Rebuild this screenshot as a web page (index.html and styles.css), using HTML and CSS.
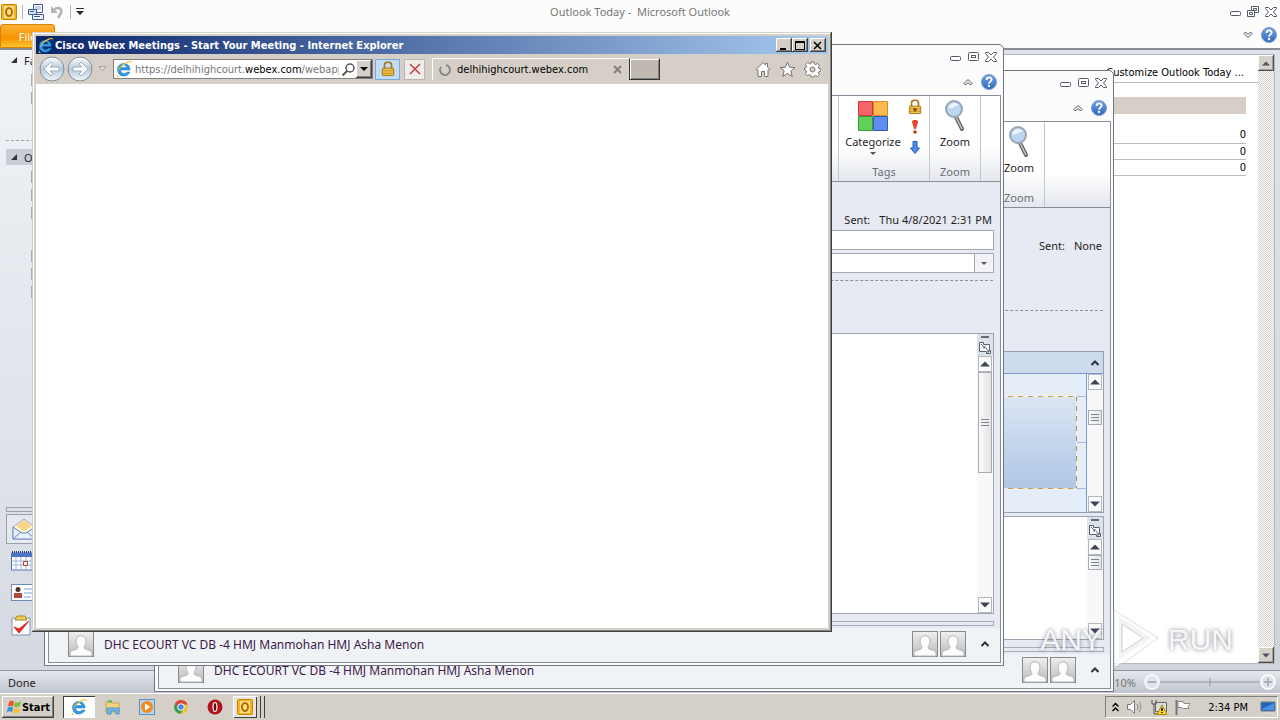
FILE: index.html
```html
<!DOCTYPE html>
<html lang="en">
<head>
  <meta charset="UTF-8">
  <meta name="viewport" content="width=device-width, initial-scale=1.0">
  <title>Desktop</title>
  <link rel="stylesheet" href="styles.css">
</head>
<body>
  <!-- Shared icons -->
  <svg class="defs" aria-hidden="true">
    <defs>
      <linearGradient id="avatar-bg" x1="0" y1="0" x2="0" y2="1">
        <stop offset="0" stop-color="#f0f0f0"/><stop offset="1" stop-color="#b8b8b8"/>
      </linearGradient>
      <linearGradient id="help-bg" x1="0" y1="0" x2="0" y2="1">
        <stop offset="0" stop-color="#6f9fe0"/><stop offset="1" stop-color="#2f6abf"/>
      </linearGradient>
      <linearGradient id="nav-bg" x1="0" y1="0" x2="0" y2="1">
        <stop offset="0" stop-color="#ffffff"/><stop offset="0.5" stop-color="#b9c8d6"/><stop offset="1" stop-color="#eef6fb"/>
      </linearGradient>
    </defs>
    <symbol id="minimize" viewBox="0 0 12 12"><rect x="1.500" y="5.500" width="10" height="4" rx="1" fill="#fff" stroke="#555b66"/></symbol>
    <symbol id="maximize" viewBox="0 0 12 12"><rect x="1.500" y="1.500" width="10" height="8" rx="1" fill="#fff" stroke="#555b66"/><rect x="4.500" y="4.500" width="4" height="2" fill="#fff" stroke="#555b66"/></symbol>
    <symbol id="restore" viewBox="0 0 12 12"><path d="M4.500 .5h7v6h-7zM6.500 2.500h3v2h-3z" fill="#fff" stroke="#555b66"/><path d="M.5 4.500h7v6h-7zM2.500 6.500h3v2h-3z" fill="#fff" stroke="#555b66"/></symbol>
    <symbol id="close" viewBox="0 0 12 12"><path d="M.5 1.500h3L6 4l2.500-2.500h3v1L8.500 6l3 3.500v1h-3L6 8l-2.500 2.500h-3v-1L3.500 6l-3-3.500z" fill="#fff" stroke="#555b66"/></symbol>
    <symbol id="caret" viewBox="0 0 10 8"><path d="M1 5.500 5 1.500l4 4-1.500 1.500L5 4.500 2.500 7z" fill="#fff" stroke="#444a55"/></symbol>
    <symbol id="caret-dark" viewBox="0 0 10 8"><path d="M1.500 6 5 2.500 8.500 6" fill="none" stroke="#2a3340" stroke-width="2"/></symbol>
    <symbol id="help" viewBox="0 0 16 16"><circle cx="8" cy="8" r="7.500" fill="url(#help-bg)" stroke="#7c9bce"/><path d="M5.500 6c0-3.500 5.200-3.300 5.200-.4C10.700 7.500 8 7.400 8 9.700" fill="none" stroke="#fff" stroke-width="1.800"/><circle cx="8" cy="12" r="1.200" fill="#fff"/></symbol>
    <symbol id="up" viewBox="0 0 10 6"><path d="M0 5.500 5 .5l5 5z" fill="#3c4558"/></symbol>
    <symbol id="down" viewBox="0 0 10 6"><path d="M0 .5h10l-5 5z" fill="#3c4558"/></symbol>
    <symbol id="resize" viewBox="0 0 14 14"><path d="M1.500 1.500h4v2h6v6h1v3h-4v-2h-7z" fill="#fff" stroke="#5a6272"/><path d="m3 3 4 4m0-2v2H5m3 0 3 4m0-2v2H9" stroke="#5a6272" fill="none"/></symbol>
    <symbol id="avatar" viewBox="0 0 26 26"><rect x=".5" y=".5" width="25" height="25" fill="url(#avatar-bg)" stroke="#8a8a8a"/><path d="M2 25v-3c0-3 7-3 8-5 0-2-2-3-2-7 0-7 10-7 10 0 0 4-2 5-2 7 1 2 8 2 8 5v3z" fill="#fdfdfd" stroke="#b5b5b5"/></symbol>
    <symbol id="magnifier" viewBox="0 0 22 34"><path d="m12 18 6 12" stroke="#666" stroke-width="4" stroke-linecap="round"/><path d="m12 18 6 12" stroke="#c4c4c4" stroke-width="1.500"/><circle cx="10" cy="10" r="8" fill="#b9d6f3" stroke="#9aa5b3" stroke-width="2"/><path d="M4 9c2-6 8-6 11-3-4 0-6 5-11 3z" fill="#eaf4fd"/></symbol>
    <symbol id="ie" viewBox="0 0 18 18"><path d="M15 10H5.500c.5 4 5 4.500 6.500 2h3c-2.500 6-12.500 5.500-12.500-2.500 0-8 13-8.500 12.500.5zM5.700 7.500h6c-.5-3.500-5.500-3.500-6 0z" fill="#2b9be6" fill-rule="evenodd" stroke="#1c72bd" stroke-width=".5"/><path d="M3.500 12C.5 17 1.500 18 5 16c-5 1-2-7 4-11s9-4 7.500.5C19 0 14 0 9 3.500S3 10 3.500 12z" fill="#f6c430"/></symbol>
    <symbol id="outlook" viewBox="0 0 16 16"><rect x=".5" y=".5" width="15" height="15" rx="1" fill="#f6b51e" stroke="#c98407"/><rect x="3" y="2" width="10" height="12" fill="#fce08a"/><ellipse cx="8" cy="8" rx="3" ry="4" fill="none" stroke="#b66d00" stroke-width="2"/></symbol>
    <symbol id="lock" viewBox="0 0 16 18"><path d="M4 9V5c0-5 8-5 8 0v4" fill="none" stroke="#a77a1a" stroke-width="2"/><rect x="1.500" y="8" width="13" height="8.500" rx="1" fill="#efc24c" stroke="#9a6b10"/><path d="M2 11h12M2 14h12" stroke="#c28d20"/></symbol>
  </svg>

  <main class="desktop">
    <!-- Outlook main window -->
    <section class="outlook">
      <header class="outlook-title">
        <div class="quick-bar">
          <svg class="icon16"><use href="#outlook"/></svg>
          <i class="bar"></i>
          <button aria-label="Send and receive"><svg width="16" height="16" viewBox="0 0 16 16"><path d="M5.500.5h9v8h-9z" fill="#fff" stroke="#3e5a9a"/><path d="M7 3h6M7 5h6" stroke="#8aa0cc"/><path d="M.5 5.500h8v5h-8z" fill="#d9e3f6" stroke="#3e5a9a"/><path d="M4.500 10.500h11v5h-11z" fill="#eef3fc" stroke="#3e5a9a"/><path d="M6 12.500h6M2 7.500h4" stroke="#3e5a9a"/></svg></button>
          <button aria-label="Undo"><svg width="16" height="16" viewBox="0 0 16 16"><path d="M4 7c4-5 10-3 8 2l-3 5" fill="none" stroke="#b4b4b4" stroke-width="2.500"/><path d="M2 2v7h7z" fill="#b4b4b4"/></svg></button>
          <i class="bar"></i>
          <button aria-label="Customize"><svg width="8" height="7" viewBox="0 0 8 7"><path d="M0 .5h8" stroke="#333"/><path d="M0 3h8L4 7z" fill="#222"/></svg></button>
        </div>
        <h1>Outlook Today - &nbsp;Microsoft Outlook</h1>
        <div class="win-buttons">
          <button aria-label="Minimize"><svg><use href="#minimize"/></svg></button>
          <button aria-label="Restore"><svg><use href="#restore"/></svg></button>
          <button aria-label="Close"><svg><use href="#close"/></svg></button>
        </div>
      </header>
      <div class="outlook-tabs">
        <button class="file-tab">File</button>
        <div class="help-row">
          <button aria-label="Expand ribbon"><svg class="caret flip"><use href="#caret"/></svg></button>
          <button aria-label="Help"><svg class="icon16"><use href="#help"/></svg></button>
        </div>
      </div>
      <div class="outlook-body">
        <nav class="folders">
          <h2><i class="tri"></i>Favorites</h2>
          <ul class="stubs"><li></li><li></li></ul>
          <hr>
          <h2 class="selected"><i class="tri"></i>Outlook Data File</h2>
          <ul class="stubs"><li></li><li></li><li></li></ul>
          <ul class="stubs second"><li></li><li></li><li></li></ul>
          <div class="modules">
            <i class="grip"></i>
            <button class="current" aria-label="Mail"><svg width="24" height="22" viewBox="0 0 24 22"><path d="M1 9 12 1l11 8v12H1z" fill="#fff8dc" stroke="#9daccc"/><path d="m4 8 8-6 8 6-8 5z" fill="#f7d486"/><path d="m1 9 9 6h4l9-6v12H1z" fill="#e7f0fc" stroke="#6886b8"/><path d="m1 21 8-7m14 7-8-7" stroke="#6886b8"/></svg></button>
            <button aria-label="Calendar"><svg width="24" height="22" viewBox="0 0 24 22"><path d="M.5 3h23v17H.5z" fill="#fff" stroke="#5576b5"/><path d="M.5 3h23v4H.5z" fill="#4b74c4"/><path d="M1 11h22M1 15h22M5 7v13m5-13v13m5-13v13m5-13v13" stroke="#9db6df"/><path d="M1 2h22" stroke="#274579" stroke-width="2" stroke-dasharray="1 1"/><path d="M12.500 11.500h4v4h-4z" fill="#fff" stroke="#c2342c"/></svg></button>
            <button aria-label="Contacts"><svg width="24" height="18" viewBox="0 0 24 18"><rect x=".5" y=".5" width="23" height="16" fill="#fff" stroke="#7189b5"/><circle cx="7" cy="5.500" r="2.500" fill="#50342a"/><path d="M3 14V9h8v5z" fill="#b44a3c"/><path d="M13 5h9m-9 4h9m-9 4h7" stroke="#7ca0da"/></svg></button>
            <button aria-label="Tasks"><svg width="20" height="21" viewBox="0 0 20 21"><path d="M1 3h18v17H1z" fill="#fff" stroke="#7e8fb3"/><path d="M6 1h8l2 4H4z" fill="#f1ce5c" stroke="#a98520"/><path d="m3 12 5 6 10-12-10 8z" fill="#e22a20" stroke="#c8312c"/></svg></button>
          </div>
        </nav>
        <article class="today">
          <div class="today-page">
            <a href="#">Customize Outlook Today ...</a>
            <div class="today-bar"></div>
            <table>
              <tr><td>0</td></tr>
              <tr><td>0</td></tr>
              <tr><td>0</td></tr>
            </table>
          </div>
          <div class="classic-scroll">
            <button aria-label="Scroll up"><svg width="8" height="5" viewBox="0 0 10 6"><use href="#up"/></svg></button>
            <button aria-label="Scroll down"><svg width="8" height="5" viewBox="0 0 10 6"><use href="#down"/></svg></button>
          </div>
        </article>
      </div>
      <footer class="outlook-status">
        <span>Done</span>
        <div class="zoom">
          <span>10%</span>
          <svg width="132" height="16" viewBox="0 0 132 16"><path d="M16 8h100M66 4v8" stroke="#8f98a5"/><g fill="#e0e4ea" stroke="#fff" stroke-width="1.500"><circle cx="8" cy="8" r="7"/><circle cx="124" cy="8" r="7"/></g><path d="M4 8h8m108 0h8m-4-4v8" stroke="#a9b0bb" stroke-width="2"/></svg>
        </div>
      </footer>
    </section>

    <!-- Meeting request window -->
    <section class="message back">
      <div class="message-frame">
        <header class="message-top">
          <div class="win-buttons">
            <button aria-label="Minimize"><svg><use href="#minimize"/></svg></button>
            <button aria-label="Maximize"><svg><use href="#maximize"/></svg></button>
            <button aria-label="Close"><svg><use href="#close"/></svg></button>
          </div>
          <div class="help-row">
            <button aria-label="Minimize ribbon"><svg class="caret"><use href="#caret"/></svg></button>
            <button aria-label="Help"><svg class="icon16"><use href="#help"/></svg></button>
          </div>
        </header>
        <div class="ribbon">
          <div class="group zoom-group">
            <button class="big"><svg width="22" height="34"><use href="#magnifier"/></svg>Zoom</button>
            <span class="group-name">Zoom</span>
          </div>
          <div class="ribbon-end"></div>
        </div>
        <div class="content">
          <p class="sent"><span>Sent:</span><span>None</span></p>
          <hr>
          <div class="calendar">
            <div class="calendar-head"><svg class="caret"><use href="#caret-dark"/></svg></div>
            <div class="calendar-row">
              <div class="slots"><div class="slot"></div></div>
              <div class="scroll">
                <button aria-label="Scroll up"><svg><use href="#up"/></svg></button>
                <i class="thumb"></i>
                <button class="last" aria-label="Scroll down"><svg><use href="#down"/></svg></button>
              </div>
            </div>
          </div>
          <div class="mail-body">
            <div class="scroll">
              <div class="scroll-top"><i class="split"></i><svg class="resize"><use href="#resize"/></svg></div>
              <button aria-label="Scroll up"><svg><use href="#up"/></svg></button>
              <i class="thumb"></i>
              <button class="last" aria-label="Scroll down"><svg><use href="#down"/></svg></button>
            </div>
          </div>
          <i class="splitter"></i>
        </div>
        <footer class="people">
          <svg class="avatar"><use href="#avatar"/></svg>
          <span>DHC ECOURT VC DB -4 HMJ Manmohan HMJ Asha Menon</span>
          <svg class="avatar"><use href="#avatar"/></svg>
          <svg class="avatar"><use href="#avatar"/></svg>
          <button aria-label="Expand"><svg class="caret"><use href="#caret-dark"/></svg></button>
        </footer>
      </div>
    </section>

    <!-- Message window -->
    <section class="message front">
      <div class="message-frame">
        <header class="message-top">
          <div class="win-buttons">
            <button aria-label="Minimize"><svg><use href="#minimize"/></svg></button>
            <button aria-label="Maximize"><svg><use href="#maximize"/></svg></button>
            <button aria-label="Close"><svg><use href="#close"/></svg></button>
          </div>
          <div class="help-row">
            <button aria-label="Minimize ribbon"><svg class="caret"><use href="#caret"/></svg></button>
            <button aria-label="Help"><svg class="icon16"><use href="#help"/></svg></button>
          </div>
        </header>
        <div class="ribbon">
          <div class="group tags-group">
            <div class="group-row">
              <button class="big">
                <svg width="30" height="34" viewBox="0 0 30 34"><g stroke-width="1"><path d="M.5 2.500h14v14H.5z" fill="#f4646a" stroke="#cf3a36"/><path d="M15.500 2.500h14v14h-14z" fill="#fbb950" stroke="#d78c20"/><path d="M.5 17.500h14v14H.5z" fill="#62cf5a" stroke="#35a332"/><path d="M15.500 17.500h14v14h-14z" fill="#5f8cf0" stroke="#3059c0"/></g></svg>
                Categorize
                <i class="drop"></i>
              </button>
              <div class="small-icons">
                <button aria-label="Private"><svg width="14" height="16" viewBox="0 0 16 18"><use href="#lock"/><path d="M8 10v4m-2-2h4" stroke="#6b4300" stroke-width="1.500"/></svg></button>
                <button aria-label="High importance"><svg width="6" height="14" viewBox="0 0 6 14"><path d="M0 2c0-3 6-3 6 0L4 9H2z" fill="#e2492b"/><circle cx="3" cy="12" r="1.800" fill="#c9371f"/></svg></button>
                <button aria-label="Low importance"><svg width="10" height="13" viewBox="0 0 10 13"><path d="M3 .5h4V7h2.500L5 12.500.5 7H3z" fill="#4c8df0" stroke="#2757b8"/></svg></button>
              </div>
            </div>
            <span class="group-name">Tags</span>
          </div>
          <div class="group zoom-group">
            <button class="big"><svg width="22" height="34"><use href="#magnifier"/></svg>Zoom</button>
            <span class="group-name">Zoom</span>
          </div>
          <div class="ribbon-end"></div>
        </div>
        <div class="content">
          <p class="sent"><span>Sent:</span><span>Thu 4/8/2021 2:31 PM</span></p>
          <input class="field" type="text" aria-label="Subject">
          <div class="field combo">
            <input type="text" aria-label="Location">
            <button aria-label="Show locations"><i class="drop"></i></button>
          </div>
          <hr>
          <div class="mail-body">
            <div class="scroll">
              <div class="scroll-top"><i class="split"></i><svg class="resize"><use href="#resize"/></svg></div>
              <button aria-label="Scroll up"><svg><use href="#up"/></svg></button>
              <i class="thumb"></i>
              <button class="last" aria-label="Scroll down"><svg><use href="#down"/></svg></button>
            </div>
          </div>
          <i class="splitter"></i>
        </div>
        <footer class="people">
          <svg class="avatar"><use href="#avatar"/></svg>
          <span>DHC ECOURT VC DB -4 HMJ Manmohan HMJ Asha Menon</span>
          <svg class="avatar"><use href="#avatar"/></svg>
          <svg class="avatar"><use href="#avatar"/></svg>
          <button aria-label="Expand"><svg class="caret"><use href="#caret-dark"/></svg></button>
        </footer>
      </div>
    </section>

    <!-- Internet Explorer window -->
    <section class="browser">
      <header class="browser-title">
        <svg width="17" height="17"><use href="#ie"/></svg>
        <h2>Cisco Webex Meetings - Start Your Meeting - Internet Explorer</h2>
        <button aria-label="Minimize"><svg width="10" height="9" viewBox="0 0 10 9"><path d="M1 7h6v2H1z"/></svg></button>
        <button aria-label="Maximize"><svg width="10" height="9" viewBox="0 0 10 9"><path d="M0 0h10v9H0zM1 2v6h8V2z" fill-rule="evenodd"/></svg></button>
        <button class="shut" aria-label="Close"><svg width="10" height="9" viewBox="0 0 10 9"><path d="m1 1 7 7m0-7L1 8" stroke="#000" stroke-width="1.500"/></svg></button>
      </header>
      <div class="toolbar">
        <button aria-label="Back"><svg width="26" height="26" viewBox="0 0 26 26"><circle cx="13" cy="13" r="12" fill="url(#nav-bg)" stroke="#78909f"/><path d="m12 6-7 7 7 7 2-2-3-3h9v-4h-9l3-3z" fill="#fff" stroke="#9bb0bd"/></svg></button>
        <button aria-label="Forward"><svg width="26" height="26" viewBox="0 0 26 26"><circle cx="13" cy="13" r="12" fill="url(#nav-bg)" stroke="#78909f"/><path d="m14 6 7 7-7 7-2-2 3-3H6v-4h9l-3-3z" fill="#fff" stroke="#9bb0bd"/></svg></button>
        <button class="recent" aria-label="Recent pages"><svg width="9" height="6" viewBox="0 0 9 6"><path d="M1 .5h7L4.500 5z" fill="#ded9d2" stroke="#aaa49b"/></svg></button>
        <div class="address">
          <svg width="18" height="18"><use href="#ie"/></svg>
          <a href="#">https://delhihighcourt.<b>webex.com</b>/webapp</a>
          <svg width="15" height="15" viewBox="0 0 15 15"><circle cx="9" cy="6" r="4" fill="none" stroke="#555" stroke-width="1.500"/><path d="M6 9 1.500 13.500" stroke="#555" stroke-width="2"/></svg>
          <button aria-label="Show history"><i class="drop"></i></button>
        </div>
        <button class="tool secure" aria-label="Security report"><svg width="14" height="16" viewBox="0 0 16 18"><use href="#lock"/></svg></button>
        <button class="tool" aria-label="Stop"><svg width="12" height="12" viewBox="0 0 12 12"><path d="m1 1 10 10m0-10L1 11" stroke="#c2404a" stroke-width="1.500"/></svg></button>
        <div class="tab">
          <svg width="14" height="14" viewBox="0 0 14 14"><path d="M8 2a5 5 0 1 1-5 2" fill="none" stroke="#888" stroke-width="2"/></svg>
          <span>delhihighcourt.webex.com</span>
          <button aria-label="Close tab"><svg width="9" height="9" viewBox="0 0 9 9"><path d="m1 1 7 7m0-7L1 8" stroke="#84807a" stroke-width="2"/></svg></button>
        </div>
        <button class="new-tab" aria-label="New tab"></button>
        <div class="commands">
          <button aria-label="Home"><svg width="16" height="16" viewBox="0 0 16 16"><path d="M1 8.500 8 1.500l2.500 2.500V2.500h2V6L15 8.500l-1 1-1-.7v6.700H9.500v-5h-3v5H3V8.800l-1 .7z" fill="#fff" stroke="#77736e"/></svg></button>
          <button aria-label="Favorites"><svg width="17" height="17" viewBox="0 0 17 17"><path d="m8.500 1 2.100 5.200 5.400.3-4.200 3.500 1.500 5.500-4.800-3-4.800 3L5.200 10 1 6.500l5.400-.3z" fill="#fff" stroke="#77736e"/></svg></button>
          <button aria-label="Tools"><svg width="17" height="17" viewBox="0 0 17 17"><path d="M7 1h3l.4 2 1.300.6 1.800-1.200 2 2-1.200 1.800.6 1.300 2 .4v2l-2 .6-.6 1.300 1.200 1.800-2 2-1.800-1.200-1.300.6L10 16H7l-.4-2-1.300-.6-1.800 1.200-2-2 1.200-1.800-.6-1.300-1.600-.5v-2l1.600-.5.6-1.300-1.200-1.800 2-2 1.800 1.200L6.600 3z" fill="#fff" stroke="#77736e"/><circle cx="8.500" cy="8.500" r="2.500" fill="#d4d0c8" stroke="#77736e"/></svg></button>
        </div>
      </div>
      <div class="page"></div>
    </section>

    <div class="watermark">
      <span>ANY</span>
      <svg width="48" height="62" viewBox="0 0 48 62"><path d="M6 4v50l38-25z" fill="#e9ebee" fill-opacity=".6" stroke="#fff" stroke-opacity=".8" stroke-width="4"/><path d="M3 1v60l44-32z" fill="none" stroke="#c0c4c9" stroke-opacity=".6"/><path d="M11 15v28l21-14z" fill="#fff" stroke="#c0c4c9" stroke-opacity=".8"/></svg>
      <span>RUN</span>
    </div>
  </main>

  <!-- Taskbar -->
  <footer class="taskbar">
    <button class="start"><svg width="16" height="16" viewBox="0 0 16 16"><path d="M3 3c2-2 4-1 5 0L7 7.500c-2-1-3-1-5 0z" fill="#e8562a"/><path d="M9 3c2 1 4 1 6-1l-1 5c-2 1-4 2-6 .5z" fill="#7bbf3a"/><path d="M2 8.500c2-1 3-1 5 0L6 13c-2-1-4-1-5.500.5z" fill="#3a8ee0"/><path d="M8 9c2 1 4 1 6-.5L13 13c-2 1.500-4 1.500-6 .5z" fill="#f6c22d"/></svg>Start</button>
    <button class="task active" aria-label="Internet Explorer"><svg width="18" height="18"><use href="#ie"/></svg></button>
    <button class="task" aria-label="Explorer"><svg width="16" height="16" viewBox="0 0 16 16"><path d="M1 3h5l1 1h7v9H1z" fill="#f1d77c" stroke="#cba941"/><path d="M3 1h4v3H3z" fill="#7ab96b"/><path d="M2 9h12v6h-3v-3H6v3H2z" fill="#73b8e6" stroke="#4e93c7"/></svg></button>
    <button class="task" aria-label="Media Player"><svg width="16" height="16" viewBox="0 0 16 16"><rect x=".5" y=".5" width="15" height="15" fill="#b5d5ee" stroke="#5990bf"/><circle cx="8" cy="8" r="6" fill="#f38a1f"/><path d="M6 4.500v7L11.500 8z" fill="#fff"/></svg></button>
    <button class="task" aria-label="Chrome"><svg width="16" height="16" viewBox="0 0 16 16"><circle cx="8" cy="8" r="7" fill="#f2c32d"/><path d="M2 4.500a7 7 0 0 1 12.500 1H8L5 9.500z" fill="#dc4437"/><path d="M2 4.500a7 7 0 0 0 5.500 10.500l3-5H6z" fill="#3a9f55"/><circle cx="8" cy="8" r="3.300" fill="#4a86e8" stroke="#fff"/></svg></button>
    <button class="task" aria-label="Opera"><svg width="16" height="16" viewBox="0 0 16 16"><ellipse cx="8" cy="8" rx="7.500" ry="7.500" fill="#b3141b"/><ellipse cx="8" cy="8" rx="2.500" ry="5" fill="#fff"/><ellipse cx="8" cy="8" rx="1.300" ry="4" fill="#6d0a0f"/></svg></button>
    <button class="task stacked" aria-label="Outlook"><svg class="icon16"><use href="#outlook"/></svg></button>
    <div class="tray">
      <svg width="7" height="10" viewBox="0 0 7 10"><path d="M.5 4.500l3-3 3 3m-6 4.500 3-3 3 3" fill="none" stroke="#000" stroke-width="1.500"/></svg>
      <svg width="16" height="16" viewBox="0 0 16 16"><path d="M.5 5.500h3l4-4v13l-4-4h-3z" fill="#fff" stroke="#777"/><path d="M10 5c1.500 2 1.500 4 0 6m2-8c2.500 3 2.500 7 0 10" fill="none" stroke="#888"/></svg>
      <svg width="16" height="16" viewBox="0 0 16 16"><path d="M4.500 3.500h11v9h-11z" fill="#ddd" stroke="#666"/><path d="M1 1v4h4V1M3 5v10h4" fill="none" stroke="#555"/><path d="m11 6 5 9.500H6z" fill="#ffd91a" stroke="#a88600"/><path d="M11 9v3m0 1v1" stroke="#000" stroke-width="1.500"/></svg>
      <svg width="16" height="16" viewBox="0 0 16 16"><path d="M1.500 1v15" stroke="#777" stroke-width="2"/><path d="M3 2.500h5l1 2h6l-2 3 1 2H8l-1-1H3z" fill="#fff" stroke="#888"/></svg>
      <time>2:34 PM</time>
      <svg width="16" height="13" viewBox="0 0 16 13"><path d="M1 1h14v9H1z" fill="#2364bd" stroke="#6c7787"/><path d="M2 8 14 2v7H2z" fill="#4b91df"/><path d="M3 12h10" stroke="#ddd"/></svg>
    </div>
  </footer>
</body>
</html>
```
FILE: styles.css
```css
/* Base Styling */
* {
  margin: 0;
  padding: 0;
  box-sizing: border-box;
}

body {
  font-family: "Noto Sans", "Open Sans", sans-serif;
  font-size: 11px;
  color: #1e1e1e;
  background-color: #d4d0c8;
  display: flex;
  flex-direction: column;
  height: 100vh;
  overflow: hidden;
}

button {
  font: inherit;
  color: inherit;
  background: none;
  border: none;
  display: flex;
  align-items: center;
  justify-content: center;
}

input {
  font: inherit;
  border: none;
  outline: none;
}

svg {
  display: block;
  flex: none;
}

i {
  display: block;
  flex: none;
}

.defs {
  position: absolute;
  width: 0;
  height: 0;
}

.icon16 {
  width: 16px;
  height: 16px;
}

.caret {
  width: 10px;
  height: 8px;
}

.flip {
  transform: rotate(180deg);
}

.drop {
  border: 3px solid transparent;
  border-top-color: #555;
  border-bottom: none;
}

.desktop {
  position: relative;
  flex: 1;
  min-height: 0;
}

/* Outlook Window */
.outlook {
  height: 100%;
  display: flex;
  flex-direction: column;
  background-color: #fcfcfc;
}

.outlook-title {
  height: 23px;
  display: grid;
  grid-template-columns: 1fr auto 1fr;
  align-items: center;
}

.outlook-title h1 {
  font-size: 11px;
  font-weight: normal;
  color: #777;
}

.quick-bar {
  display: flex;
  align-items: center;
  gap: 5px;
  padding-left: 1px;
}

.bar {
  width: 1px;
  height: 14px;
  background-color: #b5b5b5;
}

.win-buttons {
  display: flex;
  justify-content: flex-end;
  gap: 6px;
  padding-right: 3px;
}

.win-buttons svg {
  width: 12px;
  height: 12px;
}

.outlook-tabs {
  height: 25px;
  display: flex;
  align-items: flex-end;
  justify-content: space-between;
}

.file-tab {
  width: 55px;
  height: 24px;
  border: 1px solid #d98200;
  border-radius: 3px 3px 0 0;
  background: linear-gradient(#fbb13a, #f79400 60%, #ffc52e);
  color: #fff;
}

.help-row {
  height: 27px;
  display: flex;
  align-items: center;
  justify-content: flex-end;
  gap: 8px;
  padding-right: 3px;
}

.outlook-body {
  flex: 1;
  min-height: 0;
  display: flex;
  gap: 6px;
  padding: 4px 5px 6px 0;
  border-top: 2px solid #888d94;
  background: linear-gradient(#dfe3e9, #d0d5dd);
}

.folders {
  width: 200px;
  margin: -4px 0 -6px;
  display: flex;
  flex-direction: column;
  background: linear-gradient(#f0f3f7, #d5dae2);
}

.folders h2 {
  height: 16px;
  margin: 2px 0 0 6px;
  padding-left: 5px;
  display: flex;
  align-items: center;
  gap: 7px;
  font-size: 11px;
  font-weight: normal;
}

.folders hr {
  margin: 36px 0 6px 6px;
  border: none;
  border-top: 1px dashed #a3a8b0;
}

.folders h2.selected {
  background-color: #c9ced6;
}

.tri {
  border-left: 6px solid transparent;
  border-bottom: 6px solid #333;
}

.stubs {
  list-style: none;
  margin: 6px 0 0 31px;
  display: flex;
  flex-direction: column;
  gap: 6px;
}

.stubs li {
  width: 14px;
  height: 12px;
  background-color: #a9adb3;
}

.stubs.second {
  margin-top: 31px;
}

.modules {
  margin-top: auto;
  padding: 0 6px 30px;
  display: flex;
  flex-direction: column;
  gap: 2px;
}

.modules button {
  height: 30px;
  justify-content: flex-start;
  padding-left: 5px;
}

.modules .current {
  border: 1px solid #9aa1ad;
  background-color: #e6e9ee;
}

.grip {
  height: 5px;
  border: 1px solid #9aa1ad;
}

.today {
  flex: 1;
  display: flex;
  background-color: #fff;
  border: 1px solid #b3b8c0;
}

.today-page {
  flex: 1;
  padding-right: 12px;
  display: flex;
  flex-direction: column;
  font-family: "DejaVu Sans Condensed", "DejaVu Sans", sans-serif;
  color: #000;
}

.today-page a {
  height: 28px;
  margin-right: -12px;
  padding: 11px 14px 0 0;
  text-align: right;
  color: #000;
  text-decoration: none;
  border-bottom: 1px solid #bbb;
}

.today-bar {
  height: 17px;
  margin: 14px 0 13px;
  background-color: #d6cec7;
}

.today-page table {
  border-collapse: collapse;
}

.today-page td {
  height: 16px;
  text-align: right;
  border-bottom: 1px solid #bbb;
}

.classic-scroll {
  width: 16px;
  display: flex;
  flex-direction: column;
  justify-content: space-between;
  background: repeating-conic-gradient(#d4d0c8 0 25%, #fff 0 50%) 0 0 / 2px 2px;
}

.classic-scroll button {
  height: 16px;
  background-color: #d4d0c8;
  box-shadow: inset -1px -1px #404040, inset 1px 1px #fff, inset -2px -2px #999;
  opacity: 0.9;
}

.outlook-status {
  height: 23px;
  padding: 0 4px 0 8px;
  display: flex;
  align-items: center;
  justify-content: space-between;
  border-top: 1px solid #8d949e;
  background: linear-gradient(#e4e7ec, #c0c5cd);
}

.zoom {
  display: flex;
  align-items: center;
  gap: 8px;
  color: #777;
}

/* Message Windows */
.message {
  position: absolute;
  width: 960px;
  height: 622px;
  padding: 0 2px 2px 3px;
  border: 1px solid #6e7681;
  border-radius: 5px 5px 0 0;
  background-color: #fcfcfc;
}

.back {
  left: 154px;
  top: 70px;
}

.front {
  left: 44px;
  top: 44px;
}

.message-frame {
  height: 100%;
  display: flex;
  flex-direction: column;
}

.message-top {
  height: 50px;
  padding-right: 1px;
}

.message-top .win-buttons {
  height: 23px;
  align-items: center;
}

.ribbon {
  height: 87px;
  display: flex;
  justify-content: flex-end;
  border: 1px solid #868e99;
  background: linear-gradient(#fff 60%, #e4e7ec);
}

.group {
  padding: 3px 0 0;
  display: flex;
  flex-direction: column;
  align-items: center;
  justify-content: space-between;
  border-right: 1px solid #c3c8d0;
}

.tags-group {
  width: 92px;
  border-left: 1px solid #c3c8d0;
}

.zoom-group {
  width: 51px;
}

.back .ribbon-end {
  width: 65px;
}

.ribbon-end {
  width: 19px;
}

.group-row {
  display: flex;
  gap: 2px;
  padding-left: 4px;
}

.group-name {
  height: 17px;
  color: #666c76;
}

.big {
  flex-direction: column;
  gap: 1px;
}

.big .drop {
  margin-top: 2px;
}

.small-icons {
  width: 24px;
  display: flex;
  flex-direction: column;
  align-items: center;
  justify-content: space-between;
}

.small-icons button {
  height: 16px;
}

.content {
  flex: 1;
  min-height: 0;
  padding: 0 6px 0 8px;
  display: flex;
  flex-direction: column;
  border: 1px solid #868e99;
  border-width: 0 1px;
  background-color: #e7eaf2;
}

.sent {
  padding: 30px 2px 0 0;
  height: 48px;
  display: flex;
  justify-content: flex-end;
  gap: 9px;
}

.field {
  height: 20px;
  margin-bottom: 3px;
  border: 1px solid #a4a9b1;
  background-color: #fff;
}

.combo {
  display: flex;
}

.combo input {
  flex: 1;
}

.combo button {
  width: 19px;
  border-left: 1px solid #a4a9b1;
  background-color: #f1f3f7;
}

.content hr {
  margin: 4px 1px 52px 0;
  border: none;
  border-top: 1px dashed #8b909a;
}

.back .content hr {
  margin: 54px 1px 40px 0;
}

.mail-body {
  flex: 1;
  min-height: 0;
  display: flex;
  justify-content: flex-end;
  border: 1px solid #9da5b0;
  background-color: #fff;
}

.scroll {
  width: 16px;
  display: flex;
  flex-direction: column;
  background-color: #f8f8f9;
}

.scroll button {
  height: 16px;
  margin: 0 1px;
  border: 1px solid #b4b9c1;
  background-color: #fbfbfc;
}

.scroll button svg {
  width: 10px;
  height: 6px;
}

.scroll .last {
  margin-top: auto;
}

.scroll-top {
  height: 22px;
  padding-top: 2px;
  display: flex;
  flex-direction: column;
  align-items: center;
  gap: 3px;
  background-color: #dde1e8;
}

.split {
  width: 8px;
  height: 2px;
  background-color: #636c7b;
}

.resize {
  width: 14px;
  height: 14px;
}

.thumb {
  height: 15px;
  margin: 0 1px;
  border: 1px solid #a6abb4;
  background: repeating-linear-gradient(#7d838e 0 1px, transparent 1px 3px) center / 8px 7px no-repeat, linear-gradient(to right, #fafafa, #e4e4e6);
}

.front .thumb {
  height: 101px;
}

.calendar {
  height: 162px;
  margin-bottom: 3px;
  display: flex;
  flex-direction: column;
  border: 1px solid #94a0b2;
}

.calendar-head {
  height: 21px;
  padding-right: 3px;
  display: flex;
  align-items: center;
  justify-content: flex-end;
  background-color: #cddbec;
}

.calendar-row {
  flex: 1;
  display: flex;
  border-top: 1px solid #7b9ccb;
}

.slots {
  flex: 1;
  padding: 22px 9px 22px 0;
  border-right: 1px solid #7b9ccb;
  background: linear-gradient(#a3bbe0, #a3bbe0) 0 22px / 100% 1px no-repeat, linear-gradient(#a3bbe0, #a3bbe0) 0 68px / 100% 1px no-repeat, linear-gradient(#a3bbe0, #a3bbe0) 0 114px / 100% 1px no-repeat, #e5edf9;
}

/* Long orange dashes along the selected slot */
.slot {
  height: 93px;
  background:
    repeating-linear-gradient(to right, #d39a3f 0 5px, #f3efe4 5px 10px) 0 0 / 100% 1px no-repeat,
    repeating-linear-gradient(to right, #c99a50 0 5px, #e8e4da 5px 10px) 0 100% / 100% 1px no-repeat,
    repeating-linear-gradient(#c08a3c 0 5px, #f3efe4 5px 10px) 100% 0 / 1px 100% no-repeat,
    linear-gradient(#dbe6f4, #afc6e5);
}

.calendar .thumb {
  margin-top: 20px;
}

.splitter {
  height: 5px;
  margin: 7px 0 2px;
  border: 1px solid #a5acb6;
}

.people {
  height: 35px;
  padding: 0 10px 2px 19px;
  display: flex;
  align-items: center;
  gap: 2px;
  border: 1px solid #868e99;
  border-top: none;
  background-color: #f0f3f6;
}

.people span {
  flex: 1;
  padding-left: 8px;
  font-size: 12px;
  color: #3e1a48;
}

.people button {
  margin-left: 12px;
}

.avatar {
  width: 26px;
  height: 26px;
}

/* Browser Window */
.browser {
  position: absolute;
  left: 32px;
  top: 32px;
  width: 800px;
  height: 600px;
  padding: 4px;
  display: flex;
  flex-direction: column;
  font-family: "DejaVu Sans Condensed", "DejaVu Sans", sans-serif;
  background-color: #d4d0c8;
  box-shadow: inset -1px -1px #404040, inset 1px 1px #d4d0c8, inset -2px -2px #808080, inset 2px 2px #fff;
}

.browser-title {
  height: 18px;
  padding: 0 2px 0 1px;
  display: flex;
  align-items: center;
  background: linear-gradient(to right, #0a246a, #a6caf0);
}

.browser-title h2 {
  flex: 1;
  padding-left: 1px;
  font-size: 11px;
  color: #fff;
}

.browser-title button {
  width: 16px;
  height: 14px;
  background-color: #d4d0c8;
  box-shadow: inset -1px -1px #404040, inset 1px 1px #fff, inset -2px -2px #808080;
}

.browser-title .shut {
  margin-left: 2px;
}

.toolbar {
  height: 30px;
  padding: 0 7px 0 3px;
  display: flex;
  align-items: center;
  background-color: #d6cfc8;
}

.toolbar button + button {
  margin-left: 2px;
}

.recent {
  width: 14px;
}

.address {
  width: 260px;
  height: 20px;
  margin: 0 2px 0 4px;
  padding-left: 1px;
  display: flex;
  align-items: center;
  background-color: #fff;
  border: 1px solid #808080;
}

.address a {
  flex: 1;
  min-width: 0;
  margin: 0 2px;
  overflow: hidden;
  white-space: nowrap;
  color: #777;
  text-decoration: none;
}

.address b {
  font-weight: normal;
  color: #000;
}

.address button {
  width: 16px;
  height: 18px;
  background-color: #d4d0c8;
  box-shadow: inset -1px -1px #404040, inset 1px 1px #fff, inset -2px -2px #808080;
}

.address .drop {
  border-width: 4px;
  border-bottom: none;
  border-top-color: #000;
}

.tool {
  width: 21px;
  height: 21px;
  border: 1px solid #b9b5af;
  background-color: #efedeb;
}

.toolbar .tool + .tool {
  margin-left: 4px;
}

.tool.secure {
  width: 25px;
  border-color: #7aa7dc;
  background-color: #c4ddf6;
}

.tab {
  width: 197px;
  height: 22px;
  margin-left: 7px;
  padding: 0 7px 0 5px;
  display: flex;
  align-items: center;
  border-left: 1px solid #fff;
  border-top: 1px solid #fff;
}

.tab span {
  flex: 1;
  padding-left: 5px;
  color: #000;
}

.new-tab {
  width: 31px;
  height: 22px;
  background-color: #c0b9b2;
  border: 1px solid #333;
  border-top-color: #d6cfc8;
  box-shadow: inset 1px 1px #fff, inset -1px -1px #808080;
}

.commands {
  margin-left: auto;
  display: flex;
  align-items: center;
  gap: 6px;
}

.page {
  flex: 1;
  background-color: #fff;
}

/* Watermark */
.watermark {
  position: absolute;
  right: 47px;
  bottom: 22px;
  display: flex;
  align-items: center;
  gap: 9px;
  font-family: "Liberation Sans Narrow", "Liberation Sans", sans-serif;
  font-size: 30px;
  line-height: 62px;
  color: rgba(255, 255, 255, 0.9);
  text-shadow: 0 0 4px rgba(90, 95, 105, 0.8);
}

/* Taskbar */
.taskbar {
  height: 27px;
  padding: 2px;
  display: flex;
  align-items: center;
  background-color: #d4d0c8;
  border-top: 1px solid #fff;
}

.start {
  width: 52px;
  height: 22px;
  font-family: "DejaVu Sans Condensed", "DejaVu Sans", sans-serif;
  font-size: 11px;
  font-weight: bold;
  color: #000;
  box-shadow: inset -1px -1px #404040, inset 1px 1px #fff, inset -2px -2px #808080;
}

.task {
  width: 32px;
  height: 22px;
  margin-left: 2px;
}

.start + .task {
  margin-left: 9px;
}

.task.active {
  background-color: #fff;
  box-shadow: inset 1px 1px #404040;
}

.task.stacked {
  width: 24px;
  background-color: #e8e4df;
  box-shadow: inset 1px 1px #fff, inset -1px -1px #404040, 3px 0 #d4d0c8, 4px 0 #404040, 7px 0 #d4d0c8, 8px 0 #404040;
}

.tray {
  height: 22px;
  margin-left: auto;
  padding: 0 1px 0 6px;
  display: flex;
  align-items: center;
  gap: 8px;
  border: 1px solid #808080;
  border-color: #808080 #fff #fff #808080;
}

.tray time {
  padding: 0 4px 0 9px;
  font-family: "DejaVu Sans Condensed", "DejaVu Sans", sans-serif;
  color: #000;
}
```
